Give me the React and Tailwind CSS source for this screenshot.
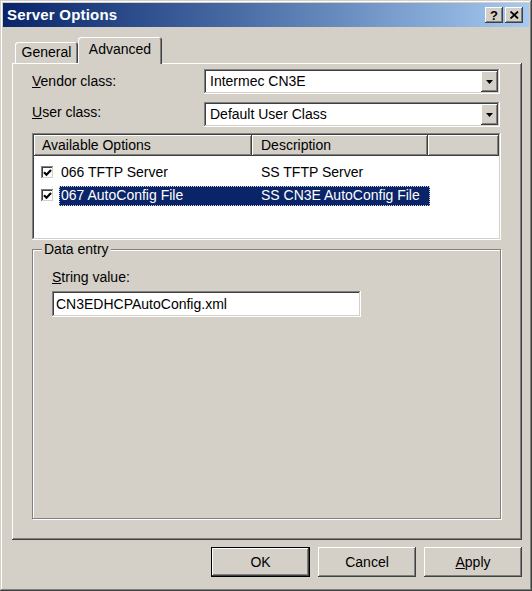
import React from "react";

const raised =
  "shadow-[inset_-1px_-1px_#404040,inset_1px_1px_#ffffff,inset_-2px_-2px_#808080,inset_2px_2px_#d4d0c8]";
const sunken =
  "shadow-[inset_-1px_-1px_#ffffff,inset_1px_1px_#808080,inset_-2px_-2px_#d4d0c8,inset_2px_2px_#404040]";

function Combo({ value }) {
  return (
    <div className={`w-[296px] h-[25px] bg-white ${sunken} p-[2px] flex items-stretch`}>
      <div className="flex-1 pl-[4px] flex items-center text-[14px] text-black">{value}</div>
      <div className={`w-[17px] bg-[#d4d0c8] ${raised} flex items-center justify-center`}>
        <svg width="7" height="4" viewBox="0 0 7 4">
          <path d="M0 0h7L3.5 4z" fill="#000" />
        </svg>
      </div>
    </div>
  );
}

function Check() {
  return (
    <div className={`w-[13px] h-[13px] bg-white ${sunken} flex items-center justify-center shrink-0`}>
      <svg width="9" height="9" viewBox="0 0 9 9">
        <path d="M1 4.2L3.5 6.7L8 2" stroke="#000" strokeWidth="2.2" fill="none" />
      </svg>
    </div>
  );
}

function Row({ name, desc, selected }) {
  return (
    <div className="h-[23px] flex items-center">
      <div className="ml-[7px]">
        <Check />
      </div>
      <div
        className={`ml-[5px] w-[371px] h-[20px] flex items-center ${
          selected ? "bg-[#0a246a] text-white border border-dotted border-[#d4d0c8]" : "text-black border border-transparent"
        }`}
      >
        <span className="w-[192px] pl-[1px]">{name}</span>
        <span className="pl-[9px]">{desc}</span>
      </div>
    </div>
  );
}

function Button({ children, isDefault }) {
  return (
    <div
      className={`h-[30px] flex ${isDefault ? "w-[99px] border border-black" : "w-[98px]"}`}
    >
      <div className={`flex-1 ${raised} bg-[#d4d0c8] flex items-center justify-center text-[14px] text-black`}>
        {children}
      </div>
    </div>
  );
}

export default function App() {
  return (
    <div
      className={`w-[532px] h-[591px] bg-[#d4d0c8] p-[3px] flex flex-col font-['Liberation_Sans',Arial,sans-serif] shadow-[inset_-1px_-1px_#404040,inset_1px_1px_#d4d0c8,inset_-2px_-2px_#808080,inset_2px_2px_#ffffff]`}
    >
      {/* Title bar */}
      <div className="h-[24px] bg-gradient-to-r from-[#0a246a] to-[#a6caf0] flex items-center pl-[4px] pr-[6px]">
        <span className="text-white font-bold text-[15px] tracking-[0.2px]">Server Options</span>
        <div className="ml-auto flex gap-[2px]">
          <div className={`w-[18px] h-[16px] bg-[#d4d0c8] ${raised} flex items-center justify-center text-[13px] font-bold text-black leading-none`}>
            ?
          </div>
          <div className={`w-[18px] h-[16px] bg-[#d4d0c8] ${raised} flex items-center justify-center`}>
            <svg width="9" height="8" viewBox="0 0 9 8">
              <path d="M0.5 0.5L8 7.5M8 0.5L0.5 7.5" stroke="#000" strokeWidth="1.8" />
            </svg>
          </div>
        </div>
      </div>

      {/* Tabs */}
      <div className="mt-[10px] ml-[9px] h-[26px] flex items-end">
        <div className="ml-[3px] w-[63px] h-[21px] rounded-t-[3px] shadow-[inset_1px_1px_#ffffff,inset_-1px_0_#404040,inset_-2px_0_#808080] flex items-center justify-center text-[14px] text-black">
          General
        </div>
        <div className="relative z-10 -mb-[1px] w-[84px] h-[27px] bg-[#d4d0c8] rounded-t-[3px] shadow-[inset_1px_1px_#ffffff,inset_-1px_0_#404040,inset_-2px_0_#808080] flex items-center justify-center pb-[2px] text-[14px] text-black">
          Advanced
        </div>
      </div>

      {/* Tab panel */}
      <div className={`ml-[9px] w-[510px] h-[477px] ${raised} pt-[6px] pl-[20px] flex flex-col text-[14px] text-black`}>
        <div className="h-[25px] flex items-center">
          <span className="w-[172px]">
            <span className="underline">V</span>endor class:
          </span>
          <Combo value="Intermec CN3E" />
        </div>
        <div className="mt-[8px] h-[25px] flex items-center">
          <span className="w-[172px] self-start">
            <span className="underline">U</span>ser class:
          </span>
          <Combo value="Default User Class" />
        </div>

        {/* List view */}
        <div className={`mt-[6px] w-[469px] h-[107px] bg-white ${sunken} p-[2px] flex flex-col`}>
          <div className="h-[21px] flex">
            <div className={`w-[218px] bg-[#d4d0c8] ${raised} flex items-center pl-[8px]`}>Available Options</div>
            <div className={`w-[176px] bg-[#d4d0c8] ${raised} flex items-center pl-[9px]`}>Description</div>
            <div className={`flex-1 bg-[#d4d0c8] ${raised}`} />
          </div>
          <div className="pt-[5px]">
            <Row name="066 TFTP Server" desc="SS TFTP Server" />
            <Row name="067 AutoConfig File" desc="SS CN3E AutoConfig File" selected />
          </div>
        </div>

        {/* Data entry group */}
        <fieldset className="mt-[1px] w-[469px] h-[278px] border border-[#808080] shadow-[inset_1px_1px_#ffffff,1px_1px_#ffffff]">
          <legend className="ml-[9px] px-[2px] bg-[#d4d0c8] leading-[16px]">Data entry</legend>
          <div className="pl-[19px] mt-[12px] leading-[16px]">
            <span className="underline">S</span>tring value:
          </div>
          <div className="pl-[19px] mt-[6px]">
            <div className={`w-[309px] h-[26px] bg-white ${sunken} flex items-center pl-[4px]`}>
              CN3EDHCPAutoConfig.xml
            </div>
          </div>
        </fieldset>
      </div>

      {/* Buttons */}
      <div className="ml-[9px] w-[510px] mt-[7px] flex justify-end gap-[8px]">
        <Button isDefault>OK</Button>
        <Button>Cancel</Button>
        <Button>
          <span>
            <span className="underline">A</span>pply
          </span>
        </Button>
      </div>
    </div>
  );
}
